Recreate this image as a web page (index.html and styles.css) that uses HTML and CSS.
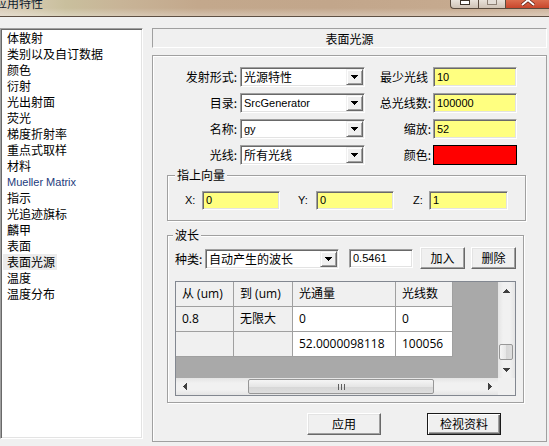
FILE: index.html
```html
<!DOCTYPE html>
<html lang="zh-CN">
<head>
<meta charset="utf-8">
<title>应用特性</title>
<link rel="stylesheet" href="styles.css">
</head>
<body>
<div class="titlebar">
  <span class="title">应用特性</span>
  <div class="caption">
    <span class="cap cap-min"><svg width="12" height="6" viewBox="0 0 12 6"><rect x="1.5" y="0.5" width="9" height="4" fill="#ffffff" stroke="#3c3228"/></svg></span>
    <span class="cap cap-max"><svg width="12" height="6" viewBox="0 0 12 6"><rect x="1.5" y="-1.5" width="9" height="6" fill="#e4ddd6" stroke="#8d8074"/></svg></span>
    <span class="cap cap-close"><svg width="18" height="6" viewBox="0 0 18 6"><path d="M3 -5 L15 5 M15 -5 L3 5" stroke="#5a1c10" stroke-width="3.4"/><path d="M3 -5 L15 5 M15 -5 L3 5" stroke="#ffffff" stroke-width="2"/></svg></span>
  </div>
</div>

<div class="main">
  <ul class="listbox">
    <li>体散射</li>
    <li>类别以及自订数据</li>
    <li>颜色</li>
    <li>衍射</li>
    <li>光出射面</li>
    <li>荧光</li>
    <li>梯度折射率</li>
    <li>重点式取样</li>
    <li>材料</li>
    <li class="en">Mueller Matrix</li>
    <li>指示</li>
    <li>光追迹旗标</li>
    <li>麟甲</li>
    <li>表面</li>
    <li><span class="sel">表面光源</span></li>
    <li>温度</li>
    <li>温度分布</li>
  </ul>

  <div class="side">
    <div class="heading">表面光源</div>
    <div class="panel">
      <div class="props">
        <label class="lbl lbl-l">发射形式:</label>
        <div class="combo"><span class="val">光源特性</span><span class="drop"><svg width="7" height="4" viewBox="0 0 7 4"><path d="M0 0H7V1H6V2H5V3H4V4H3V3H2V2H1V1H0Z" fill="#000"/></svg></span></div>
        <label class="lbl lbl-r nocolon">最少光线</label>
        <div class="field yellow">10</div>

        <label class="lbl lbl-l">目录:</label>
        <div class="combo"><span class="val lat">SrcGenerator</span><span class="drop"><svg width="7" height="4" viewBox="0 0 7 4"><path d="M0 0H7V1H6V2H5V3H4V4H3V3H2V2H1V1H0Z" fill="#000"/></svg></span></div>
        <label class="lbl lbl-r">总光线数:</label>
        <div class="field yellow">100000</div>

        <label class="lbl lbl-l">名称:</label>
        <div class="combo"><span class="val lat">gy</span><span class="drop"><svg width="7" height="4" viewBox="0 0 7 4"><path d="M0 0H7V1H6V2H5V3H4V4H3V3H2V2H1V1H0Z" fill="#000"/></svg></span></div>
        <label class="lbl lbl-r">缩放:</label>
        <div class="field yellow">52</div>

        <label class="lbl lbl-l">光线:</label>
        <div class="combo"><span class="val">所有光线</span><span class="drop"><svg width="7" height="4" viewBox="0 0 7 4"><path d="M0 0H7V1H6V2H5V3H4V4H3V3H2V2H1V1H0Z" fill="#000"/></svg></span></div>
        <label class="lbl lbl-r">颜色:</label>
        <div class="swatch"></div>
      </div>

      <fieldset class="group g-vec">
        <legend>指上向量</legend>
        <div class="vec">
          <span class="axis ax-x">X:</span><div class="field yellow fx">0</div>
          <span class="axis ax-y">Y:</span><div class="field yellow fy">0</div>
          <span class="axis ax-z">Z:</span><div class="field yellow fz">1</div>
        </div>
      </fieldset>

      <fieldset class="group g-wave">
        <legend>波长</legend>
        <div class="wave-row">
          <label class="kind">种类:</label>
          <div class="combo combo-kind"><span class="val">自动产生的波长</span><span class="drop"><svg width="7" height="4" viewBox="0 0 7 4"><path d="M0 0H7V1H6V2H5V3H4V4H3V3H2V2H1V1H0Z" fill="#000"/></svg></span></div>
          <div class="field white wl">0.5461</div>
          <button class="btn btn-add">加入</button>
          <button class="btn btn-del">删除</button>
        </div>

        <div class="gridbox">
          <div class="cells">
            <div class="cell head">从 (um)</div>
            <div class="cell head">到 (um)</div>
            <div class="cell head">光通量</div>
            <div class="cell head">光线数</div>

            <div class="cell fixed">0.8</div>
            <div class="cell fixed">无限大</div>
            <div class="cell">0</div>
            <div class="cell">0</div>

            <div class="cell fixed"></div>
            <div class="cell fixed"></div>
            <div class="cell">52.0000098118</div>
            <div class="cell">100056</div>
          </div>
          <div class="vscroll">
            <span class="arrow"><svg width="7" height="4" viewBox="0 0 7 4"><path d="M3 0H4V1H5V2H6V3H7V4H0V3H1V2H2V1H3Z" fill="#404040"/></svg></span>
            <div class="vtrack"><div class="vthumb"></div></div>
            <span class="arrow"><svg width="7" height="4" viewBox="0 0 7 4"><path d="M0 0H7V1H6V2H5V3H4V4H3V3H2V2H1V1H0Z" fill="#404040"/></svg></span>
          </div>
          <div class="hscroll">
            <span class="arrow"><svg width="4" height="7" viewBox="0 0 4 7"><path d="M0 3V4H1V5H2V6H3V7H4V0H3V1H2V2H1V3Z" fill="#404040"/></svg></span>
            <div class="htrack"><div class="hthumb"><span class="grip"></span></div></div>
            <span class="arrow"><svg width="4" height="7" viewBox="0 0 4 7"><path d="M0 0H1V1H2V2H3V3H4V4H3V5H2V6H1V7H0Z" fill="#404040"/></svg></span>
          </div>
          <div class="corner"></div>
        </div>
      </fieldset>

      <div class="actions">
        <button class="btn btn-wide">应用</button>
        <button class="btn btn-wide btn-default">检视资料</button>
      </div>
    </div>
  </div>
</div>
</body>
</html>
```

FILE: styles.css
```css
* { box-sizing: border-box; }
html, body { margin: 0; padding: 0; }
body {
  width: 549px;
  height: 446px;
  overflow: hidden;
  background: #f0f0f0;
  color: #000;
  font-family: "Noto Sans CJK SC", "Noto Sans CJK TC", sans-serif;
  font-size: 12px;
}

/* ---------- title bar ---------- */
.titlebar {
  height: 17px;
  display: flex;
  align-items: flex-start;
  overflow: hidden;
  border-bottom: 1px solid #5e5044;
  background:
    linear-gradient(to bottom, rgba(255,255,255,0) 50%, rgba(255,255,255,0.3) 100%),
    linear-gradient(to right, #d9ccb9 0%, #d3c8ad 6%, #c9bf9d 12%, #c8b497 22%, #c3a88c 36%, #c2a68b 60%, #c6aa8f 85%, #cdb39b 100%);
}
.title {
  margin: -3px 0 0 -5px;
  font-size: 12px;
  line-height: 12px;
  color: #0c1a2e;
  white-space: nowrap;
}
.caption {
  margin-left: auto;
  display: flex;
  height: 9px;
}
.cap {
  display: flex;
  justify-content: center;
  align-items: flex-start;
  height: 9px;
  overflow: hidden;
  border: 1px solid #5a4b3e;
  border-top: 0;
  border-right: 0;
}
.cap-min {
  width: 28px;
  border-radius: 0 0 0 4px;
  background: linear-gradient(#e9e2da, #cfc2b5);
}
.cap-max {
  width: 27px;
  background: linear-gradient(#e9e2da, #cfc2b5);
}
.cap-close {
  width: 44px;
  background: linear-gradient(#dc6d4e, #c8462c);
}

/* ---------- main layout ---------- */
.main {
  display: flex;
  gap: 9px;
  padding-top: 11px;
}

.listbox {
  list-style: none;
  margin: 0;
  padding: 1px 0 0;
  width: 143px;
  height: 411px;
  background: #fff;
  border: 1px solid;
  border-color: #a0a0a0 #ffffff #ffffff #a0a0a0;
  box-shadow: inset 1px 1px 0 #696969, inset -1px -1px 0 #e3e3e3;
  overflow: hidden;
}
.listbox li {
  height: 16px;
  line-height: 16px;
  padding-left: 6px;
  white-space: nowrap;
}
.listbox li.en {
  font-family: "Liberation Sans", sans-serif;
  font-size: 11px;
  color: #1d3b7c;
}
.listbox .sel {
  display: inline-block;
  margin-left: -4px;
  padding: 0 2px 0 4px;
  background: #ececec;
}

.side {
  width: 395px;
  display: flex;
  flex-direction: column;
}
.heading {
  height: 20px;
  border: 1px solid;
  border-color: #a0a0a0 #ffffff #ffffff #a0a0a0;
  text-align: center;
  line-height: 16px;
  padding-top: 2px;
}
.panel {
  margin-top: 7px;
  height: 387px;
  border: 1px solid #a0a0a0;
  box-shadow: inset 1px 1px 0 #fff;
  padding-top: 11px;
}

/* ---------- property grid ---------- */
.props {
  display: grid;
  grid-template-columns: 87px 125px 68px 84px;
  grid-auto-rows: 20px;
  row-gap: 6px;
}
.lbl {
  line-height: 20px;
  text-align: right;
  white-space: nowrap;
}
.lbl-l { padding-right: 3px; }
.lbl-r { padding-right: 2px; }
.lbl-r.nocolon { padding-right: 5px; }

.combo, .field {
  border: 1px solid;
  border-color: #a0a0a0 #ffffff #ffffff #a0a0a0;
  box-shadow: inset 1px 1px 0 #696969, inset -1px -1px 0 #e3e3e3;
}
.combo {
  display: flex;
  height: 20px;
  padding: 1px;
  background: #fff;
}
.combo .val {
  flex: 1;
  padding-left: 2px;
  line-height: 16px;
  white-space: nowrap;
  overflow: hidden;
}
.combo .val.lat {
  font-family: "Liberation Sans", sans-serif;
  font-size: 11px;
}
.drop {
  flex: none;
  width: 17px;
  height: 16px;
  display: flex;
  align-items: center;
  justify-content: center;
  background: #f0f0f0;
  border: 1px solid;
  border-color: #f0f0f0 #696969 #696969 #f0f0f0;
  box-shadow: inset 1px 1px 0 #fff, inset -1px -1px 0 #a0a0a0;
}
.drop svg { display: block; }

.field {
  height: 20px;
  padding: 1px 1px 1px 3px;
  line-height: 16px;
  font-family: "Liberation Sans", sans-serif;
  font-size: 11px;
  white-space: nowrap;
  overflow: hidden;
}
.yellow { background: #ffff80; }
.white { background: #ffffff; }
.swatch {
  height: 20px;
  background: #ff0000;
  border: 1px solid #000;
}

/* ---------- group boxes ---------- */
.group {
  margin: 0;
  padding: 0 0 10px;
  border: 1px solid #a0a0a0;
  box-shadow: inset 1px 1px 0 #fff, 1px 1px 0 #fff;
  min-inline-size: 0;
}
.group legend {
  padding: 0 2px;
  font-size: 12px;
  line-height: 12px;
  background: #f0f0f0;
}
.g-vec {
  margin: 4px 0 0 14px;
  width: 359px;
}
.g-vec legend { margin-left: 7px; }
.g-wave {
  margin: 8px 0 0 14px;
  width: 357px;
  padding-bottom: 6px;
}
.g-wave legend { margin-left: 5px; }

.vec {
  display: flex;
  margin-top: 10px;
  padding-left: 17px;
  height: 19px;
}
.axis {
  font-family: "Liberation Sans", sans-serif;
  font-size: 11px;
  line-height: 19px;
}
.ax-x { width: 17px; }
.ax-y { width: 18px; margin-left: 18px; }
.ax-z { width: 16px; margin-left: 19px; }
.vec .field { height: 19px; line-height: 15px; }
.fx, .fy { width: 78px; }
.fz { width: 79px; }

.wave-row {
  display: flex;
  align-items: flex-end;
  margin-top: 6px;
  padding-left: 7px;
  height: 22px;
}
.kind {
  width: 30px;
  line-height: 20px;
  white-space: nowrap;
}
.combo-kind { width: 134px; }
.wl {
  width: 64px;
  height: 19px;
  line-height: 15px;
  margin: 0 0 1px 10px;
}

/* ---------- buttons ---------- */
.btn {
  appearance: none;
  margin: 0;
  padding: 0;
  font-family: "Noto Sans CJK SC", "Noto Sans CJK TC", sans-serif;
  font-size: 12px;
  color: #000;
  width: 45px;
  height: 22px;
  line-height: 18px;
  background: #f0f0f0;
  border: 1px solid;
  border-color: #ffffff #696969 #696969 #ffffff;
  box-shadow: inset -1px -1px 0 #a0a0a0, inset 1px 1px 0 #e3e3e3;
}
.btn-add { margin-left: 7px; }
.btn-del { margin-left: 6px; }
.btn-wide { width: 74px; }
.btn-default {
  border-color: #1a1a1a;
  box-shadow: inset 1px 1px 0 #fff, inset -1px -1px 0 #696969, inset -2px -2px 0 #a0a0a0;
}

.actions {
  display: flex;
  gap: 46px;
  margin-top: 10px;
  padding-left: 154px;
}

/* ---------- data grid ---------- */
.gridbox {
  margin: 12px 0 0 7px;
  width: 341px;
  height: 115px;
  border: 1px solid #828790;
  display: grid;
  grid-template-columns: 322px 17px;
  grid-template-rows: 96px 17px;
  background: #fff;
}
.cells {
  background: #a9a9a9;
  display: grid;
  grid-template-columns: 58px 59px 103px 57px;
  grid-auto-rows: 25px;
  align-content: start;
  font-family: "Open Sans", "Noto Sans CJK SC", sans-serif;
  font-size: 12px;
  overflow: hidden;
}
.cell {
  border-right: 1px solid #a0a0a0;
  border-bottom: 1px solid #a0a0a0;
  padding-left: 6px;
  line-height: 24px;
  white-space: nowrap;
  overflow: hidden;
  background: #fff;
}
.cell.head, .cell.fixed { background: #f0f0f0; }

.vscroll {
  display: flex;
  flex-direction: column;
  background: linear-gradient(to right, #e4e4e4, #f1f1f1 30%, #f1f1f1 70%, #e4e4e4);
}
.hscroll {
  display: flex;
  background: linear-gradient(to bottom, #e4e4e4, #f1f1f1 30%, #f1f1f1 70%, #e4e4e4);
}
.arrow {
  flex: none;
  width: 17px;
  height: 17px;
  display: flex;
  align-items: center;
  justify-content: center;
}
.arrow svg { display: block; }
.vtrack, .htrack { flex: 1; }
.vthumb {
  margin: 45px 2px 0 1px;
  height: 16px;
  border: 1px solid #979797;
  border-radius: 2px;
  background: linear-gradient(to right, #f5f5f5, #e6e6e6 50%, #d6d6d6 51%, #dedede);
}
.hthumb {
  margin: 1px 0 0 55px;
  width: 186px;
  height: 15px;
  border: 1px solid #979797;
  border-radius: 2px;
  background: linear-gradient(#f5f5f5, #e6e6e6 50%, #d6d6d6 51%, #dedede);
  display: flex;
  align-items: center;
  justify-content: center;
}
.grip {
  width: 7px;
  height: 6px;
  background: repeating-linear-gradient(to right, #5f5f5f 0 1px, transparent 1px 3px);
}
.corner { background: #f0f0f0; }
```
